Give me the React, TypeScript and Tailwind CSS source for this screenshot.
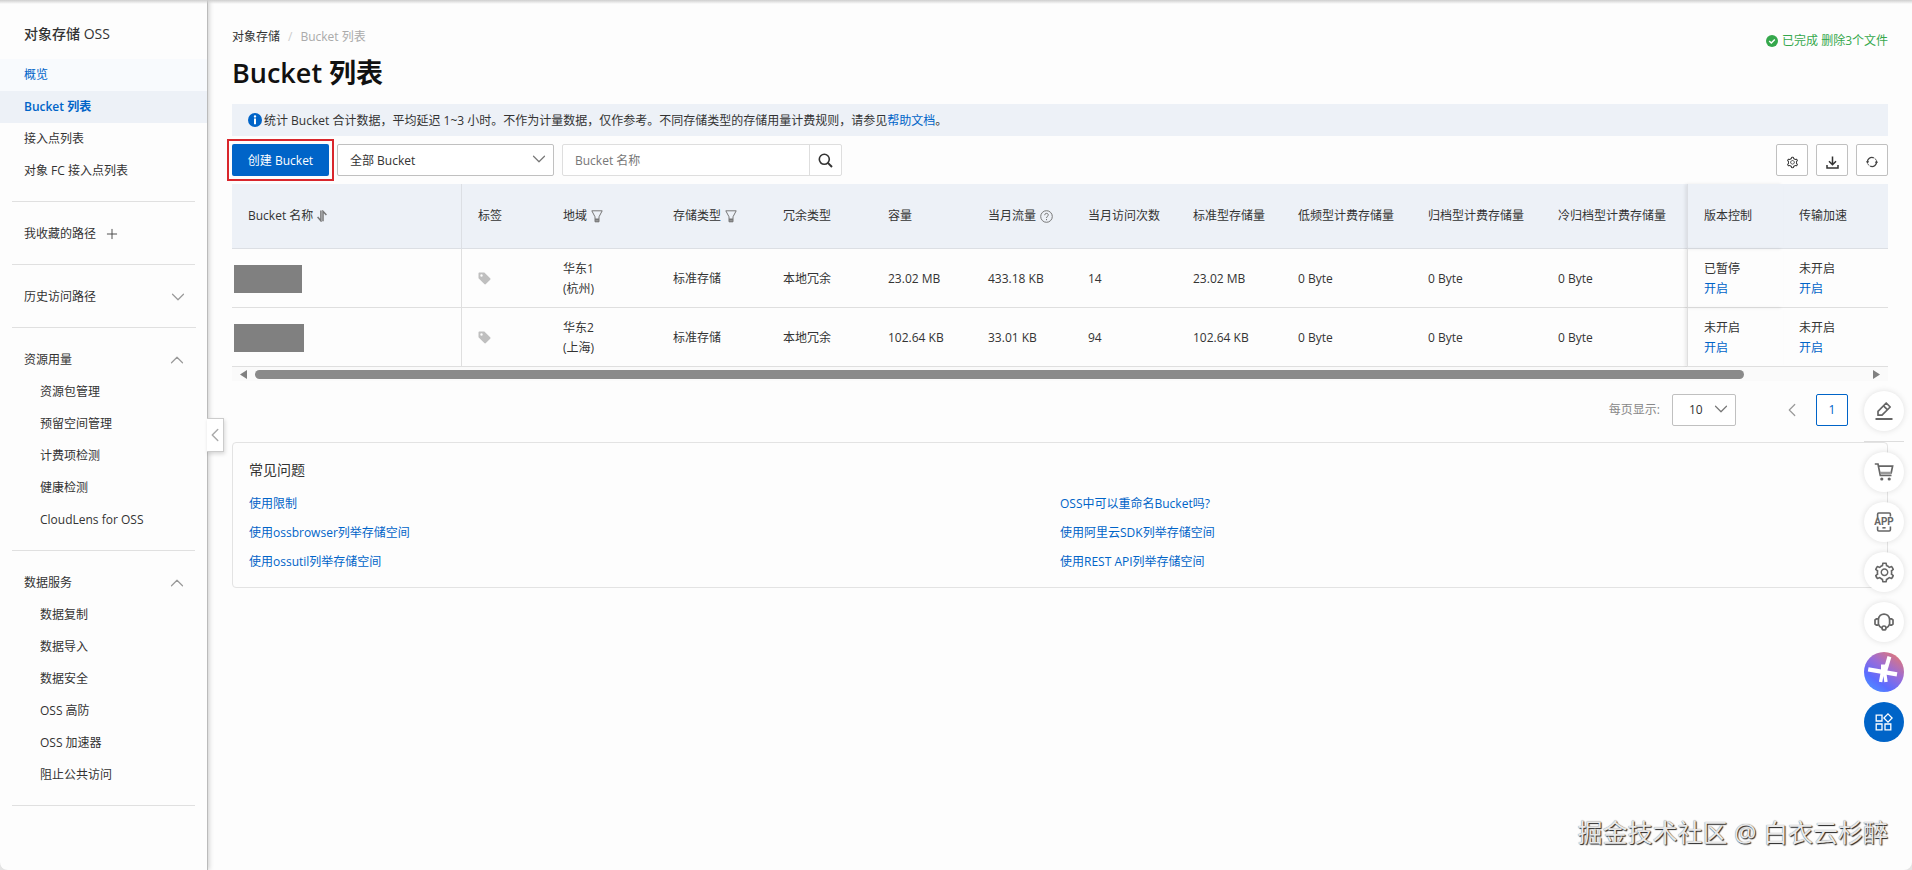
import type { ReactNode } from "react";
import { ChevronDown, ChevronLeft, ChevronUp, Plus } from "lucide-react";
import { AiOutlineSetting } from "react-icons/ai";

const NAV = [
  { label: "概览", className: "bg-[#f8fafd] text-[#0064c8]" },
  { label: "Bucket 列表", className: "bg-[#edf1f7] font-semibold text-[#0064c8]" },
  { label: "接入点列表", className: "" },
  { label: "对象 FC 接入点列表", className: "" },
];

const USAGE = ["资源包管理", "预留空间管理", "计费项检测", "健康检测", "CloudLens for OSS"];
const SERVICES = ["数据复制", "数据导入", "数据安全", "OSS 高防", "OSS 加速器", "阻止公共访问"];

const COLUMNS: { title: string; col: string; icon?: ReactNode }[] = [
  { title: "Bucket 名称", col: "w-[230px]", icon: <SortIcon /> },
  { title: "标签", col: "w-[85px]" },
  { title: "地域", col: "w-[110px]", icon: <FunnelIcon /> },
  { title: "存储类型", col: "w-[110px]", icon: <FunnelIcon /> },
  { title: "冗余类型", col: "w-[105px]" },
  { title: "容量", col: "w-[100px]" },
  { title: "当月流量", col: "w-[100px]", icon: <HelpIcon /> },
  { title: "当月访问次数", col: "w-[105px]" },
  { title: "标准型存储量", col: "w-[105px]" },
  { title: "低频型计费存储量", col: "w-[130px]" },
  { title: "归档型计费存储量", col: "w-[130px]" },
  { title: "冷归档型计费存储量", col: "w-[145px]" },
  { title: "版本控制", col: "w-[96px]" },
  { title: "传输加速", col: "w-[105px]" },
];

const ROWS = [
  {
    mask: "w-[68px]",
    region: "华东1",
    city: "(杭州)",
    cells: ["标准存储", "本地冗余", "23.02 MB", "433.18 KB", "14", "23.02 MB", "0 Byte", "0 Byte", "0 Byte"],
    version: "已暂停",
  },
  {
    mask: "w-[70px]",
    region: "华东2",
    city: "(上海)",
    cells: ["标准存储", "本地冗余", "102.64 KB", "33.01 KB", "94", "102.64 KB", "0 Byte", "0 Byte", "0 Byte"],
    version: "未开启",
  },
];

const FAQ = [
  "使用限制",
  "OSS中可以重命名Bucket吗?",
  "使用ossbrowser列举存储空间",
  "使用阿里云SDK列举存储空间",
  "使用ossutil列举存储空间",
  "使用REST API列举存储空间",
];

function SortIcon() {
  return (
    <svg width="10" height="12" viewBox="0 0 10 12" fill="none" stroke="#777" strokeWidth="1.5">
      <path d="M3.9 0.5V10.8L0.6 7" />
      <path d="M6 11.3V1.3L9.4 5" />
    </svg>
  );
}

function FunnelIcon() {
  return (
    <svg width="12" height="13" viewBox="0 0 12 13" fill="none" stroke="#777">
      <path d="M0.8 0.8H11.2L8 6.8V11.8H4V6.8Z" />
      <path d="M4 9.2H8M4 11H8" strokeWidth="1.4" />
    </svg>
  );
}

function HelpIcon() {
  return (
    <svg width="13" height="13" viewBox="0 0 13 13" fill="none" stroke="#777">
      <circle cx="6.5" cy="6.5" r="5.8" />
      <path d="M4.7 5.2C4.7 2.7 8.3 2.8 8.3 5C8.3 6.3 6.5 6.4 6.5 8" />
      <path d="M6.5 9V10.2" />
    </svg>
  );
}

function TagIcon() {
  return (
    <svg width="13" height="13" viewBox="0 0 13 13" fill="#bfbfbf">
      <path
        fillRule="evenodd"
        d="M0.5 1.5C0.5 0.9 0.9 0.5 1.5 0.5H6.3L12.2 6.2C12.7 6.7 12.7 7.2 12.2 7.7L7.9 12C7.4 12.5 6.8 12.5 6.3 12L0.5 6.3ZM3.5 2.3A1.2 1.2 0 1 0 3.5 4.7A1.2 1.2 0 1 0 3.5 2.3Z"
      />
    </svg>
  );
}

function InfoIcon() {
  return (
    <svg width="14" height="14" viewBox="0 0 14 14">
      <circle cx="7" cy="7" r="7" fill="#0064c8" />
      <circle cx="7" cy="3.4" r="1.2" fill="#fff" />
      <path d="M7 5.6V11.2" stroke="#fff" strokeWidth="2" />
    </svg>
  );
}

function SearchIcon() {
  return (
    <svg width="15" height="15" viewBox="0 0 15 15" fill="none" stroke="#333" strokeWidth="1.6">
      <circle cx="6.3" cy="6.3" r="5" />
      <path d="M9.9 9.9L14 14" strokeWidth="2" />
    </svg>
  );
}

function DownloadIcon() {
  return (
    <svg width="13" height="13" viewBox="0 0 13 13" fill="none" stroke="#333" strokeWidth="1.5">
      <path d="M6.5 0.5V8.5M3 5.2L6.5 8.7L10 5.2" />
      <path d="M1 9V12H12V9" />
    </svg>
  );
}

function RefreshIcon() {
  return (
    <svg width="12" height="12" viewBox="0 0 12 12" fill="none" stroke="#444" strokeWidth="1.3">
      <path d="M1.6 7.2A4.6 4.6 0 0 1 7.8 1.8" />
      <path d="M10.4 4.8A4.6 4.6 0 0 1 4.2 10.2" />
      <path d="M8.6 2.3A4.6 4.6 0 0 1 10.4 4.6M3.4 9.7A4.6 4.6 0 0 1 1.7 7.6" strokeWidth="0.9" />
      <path d="M0 5.2H3.2L1.5 7.6Z" fill="#444" stroke="none" />
      <path d="M12 6.8H8.8L10.5 4.4Z" fill="#444" stroke="none" />
    </svg>
  );
}

function PencilIcon() {
  return (
    <svg width="20" height="20" viewBox="0 0 20 20" fill="none" stroke="#666" strokeWidth="1.7" strokeLinejoin="round">
      <path d="M4 10.3L12.2 2L16.2 6L8 14.2H4Z" />
      <path d="M9.5 4.8L13.4 8.7" />
      <path d="M1.5 18H18.5" strokeWidth="2" />
    </svg>
  );
}

function CartIcon() {
  return (
    <svg width="20" height="20" viewBox="0 0 20 20" fill="none" stroke="#666" strokeWidth="1.7">
      <path d="M0.8 2H4L6.3 13.5H17.5" />
      <path d="M4.6 4.2H18.6L17.2 11H6" />
      <path d="M6.2 9.8H17.2V12.6H6.4Z" fill="#999" stroke="none" />
      <circle cx="7.8" cy="17" r="1.6" fill="#666" stroke="none" />
      <circle cx="15.2" cy="17" r="1.6" fill="#666" stroke="none" />
    </svg>
  );
}

function AppIcon() {
  return (
    <svg width="20" height="20" viewBox="0 0 20 20" fill="none" stroke="#666" strokeWidth="1.6">
      <path d="M3.6 5V2.2Q3.6 1 4.8 1H15.2Q16.4 1 16.4 2.2V4.5" />
      <path d="M3.6 14.5V17.8Q3.6 19 4.8 19H15.2Q16.4 19 16.4 17.8V14.5" />
      <path d="M8.4 15.8H11.6" />
      <text
        x="10"
        y="13"
        textAnchor="middle"
        fill="#666"
        stroke="none"
        fontSize="10"
        fontWeight="700"
        fontFamily="Roboto, sans-serif"
      >
        APP
      </text>
    </svg>
  );
}

function HeadsetIcon() {
  return (
    <svg width="20" height="20" viewBox="0 0 20 20" fill="none" stroke="#666" strokeWidth="1.7" strokeLinejoin="round">
      <path d="M4.4 13V7.6C4.8 0.2 15.2 0.2 15.6 7.6V13" />
      <path d="M4.4 6.8H2.6L1 8V12L2.6 13.2H4.4" />
      <path d="M15.6 6.8H17.4L19 8V12L17.4 13.2H15.6" />
      <path d="M15.4 12.6C14.9 14.2 13.8 15.4 12.2 16M4.6 12.6C5.1 14.2 6.2 15.4 7.8 16" />
      <circle cx="10" cy="16" r="2" />
    </svg>
  );
}

function SparkIcon() {
  return (
    <svg width="40" height="40" viewBox="0 0 40 40" fill="none" stroke="#fff">
      <path d="M25.4 4.6L20.6 21" strokeWidth="4" />
      <path d="M4.2 17.4L33 22.4" strokeWidth="4.2" />
      <path d="M17 12.5H22.5V21H17Z" fill="#fff" stroke="none" />
      <path d="M18.6 19L16.6 30M20.4 19L22 30" strokeWidth="3.4" />
    </svg>
  );
}

function BlocksIcon() {
  return (
    <svg width="18" height="18" viewBox="0 0 18 18" fill="none" stroke="#fff" strokeWidth="1.3">
      <path d="M1.2 2.2H7V8H1.2ZM1.2 11H7V16.8H1.2ZM10 11H15.8V16.8H10Z" />
      <path d="M13 0.9L17.1 5L13 9.1L8.9 5Z" />
    </svg>
  );
}

const FLOATS = [
  { label: "购物车", icon: <CartIcon /> },
  { label: "应用", icon: <AppIcon /> },
  { label: "设置", icon: <AiOutlineSetting size={23} color="#666" /> },
  { label: "客服", icon: <HeadsetIcon /> },
];

const floatBase = "flex size-10 items-center justify-center rounded-full";
const floatWhite = `${floatBase} bg-white shadow-[0_0_6px_rgba(0,0,0,0.12)]`;

function NavGroup({ title, items }: { title: string; items: string[] }) {
  return (
    <section className="mx-3 border-b border-[#e0e0e0] py-[15px]">
      <button type="button" className="flex h-8 w-full items-center justify-between pt-px pr-[7px] pl-3">
        {title}
        <ChevronUp size={22} strokeWidth={1.3} color="#999" />
      </button>
      <ul>
        {items.map((item) => (
          <li key={item}>
            <a href="#" className="flex h-8 items-center pt-px pl-7">
              {item}
            </a>
          </li>
        ))}
      </ul>
    </section>
  );
}

function Sidebar() {
  return (
    <nav className="relative w-52 shrink-0 border-r border-[#bbb] bg-[#fdfdfd] shadow-[1px_0_5px_rgba(0,0,0,0.2)]">
      <h2 className="flex h-[59px] items-center pt-2 pl-6 text-sm font-medium">对象存储 OSS</h2>
      <ul>
        {NAV.map((item) => (
          <li key={item.label}>
            <a href="#" className={`flex h-8 items-center pl-6 ${item.className}`}>
              {item.label}
            </a>
          </li>
        ))}
      </ul>
      <div className="mx-3 h-[15px] border-b border-[#e0e0e0]" />
      <div className="mx-3 flex h-[63px] items-center gap-2 border-b border-[#e0e0e0] pt-px pl-3">
        我收藏的路径
        <button type="button" aria-label="添加">
          <Plus size={16} strokeWidth={1.4} color="#444" />
        </button>
      </div>
      <button
        type="button"
        className="mx-3 flex h-[63px] w-[184px] items-center justify-between border-b border-[#e0e0e0] pt-px pr-[7px] pl-3"
      >
        历史访问路径
        <ChevronDown size={22} strokeWidth={1.3} color="#999" />
      </button>
      <NavGroup title="资源用量" items={USAGE} />
      <NavGroup title="数据服务" items={SERVICES} />
      <button
        type="button"
        aria-label="收起"
        className="absolute top-[418px] left-full flex h-[34px] w-[17px] items-center justify-center border border-l-0 border-[#ccc] bg-white shadow-[1px_2px_4px_rgba(0,0,0,0.15)]"
      >
        <ChevronLeft size={22} strokeWidth={1.6} color="#aaa" className="shrink-0" />
      </button>
    </nav>
  );
}

function SelectArrow() {
  return (
    <ChevronDown
      size={22}
      strokeWidth={1.3}
      color="#777"
      className="pointer-events-none absolute top-1 right-1"
    />
  );
}

function Toolbar() {
  const square = "flex size-8 items-center justify-center rounded-xs border border-[#c0c0c0] bg-white pt-1";
  return (
    <div className="mt-2 flex gap-2">
      <div className="outline-2 outline-offset-3 outline-[#d9262c]">
        <button type="button" className="block h-8 w-[97px] rounded-xs bg-[#0064c8] pt-px text-white">
          创建 Bucket
        </button>
      </div>
      <div className="relative">
        <select
          aria-label="Bucket 范围"
          className="h-8 w-[217px] appearance-none rounded-xs border border-[#c0c0c0] bg-white px-3 pt-px"
        >
          <option>全部 Bucket</option>
        </select>
        <SelectArrow />
      </div>
      <div className="flex h-8 w-70 rounded-xs border border-[#dedede] bg-white">
        <input
          type="text"
          aria-label="Bucket 名称"
          placeholder="Bucket 名称"
          className="min-w-0 flex-1 px-3 pt-px outline-none placeholder:text-[#777]"
        />
        <button
          type="button"
          aria-label="搜索"
          className="flex w-8 items-center justify-center border-l border-[#dedede]"
        >
          <SearchIcon />
        </button>
      </div>
      <div className="ml-auto flex gap-2">
        <button type="button" aria-label="列设置" className={square}>
          <AiOutlineSetting size={13} color="#333" />
        </button>
        <button type="button" aria-label="下载" className={square}>
          <DownloadIcon />
        </button>
        <button type="button" aria-label="刷新" className={square}>
          <RefreshIcon />
        </button>
      </div>
    </div>
  );
}

function cellBorder(index: number) {
  if (index === 0) return "border-r";
  if (index === 12) return "border-l shadow-[-2px_0_3px_rgba(0,0,0,0.08)]";
  return "";
}

function BucketTable() {
  return (
    <div className="mt-2">
      <table className="w-full table-fixed border-separate border-spacing-0 text-left">
        <thead>
          <tr className="h-[65px] bg-[#edf1f7]">
            {COLUMNS.map((column, index) => (
              <th
                key={column.title}
                className={`border-b border-[#dcdfe4] pl-4 font-normal whitespace-nowrap ${column.col} ${cellBorder(index)}`}
              >
                <span className="flex items-center gap-1">
                  {column.title}
                  {column.icon}
                </span>
              </th>
            ))}
          </tr>
        </thead>
        <tbody>
          {ROWS.map((row) => (
            <tr key={row.region} className="h-[59px]">
              <td className="border-r border-b border-[#dfdfdf] pt-[2px] pl-[2px]">
                <div className={`h-7 bg-[#808080] ${row.mask}`} />
              </td>
              <td className="border-b border-[#dfdfdf] pt-px pl-4">
                <TagIcon />
              </td>
              <td className="border-b border-[#dfdfdf] pt-px pl-4 leading-5">
                {row.region}
                <br />
                {row.city}
              </td>
              {row.cells.map((cell, index) => (
                <td key={index} className="border-b border-[#dfdfdf] pt-px pl-4">
                  {cell}
                </td>
              ))}
              <td className="border-b border-l border-[#dfdfdf] pt-px pl-4 leading-5 shadow-[-2px_0_3px_rgba(0,0,0,0.08)]">
                {row.version}
                <br />
                <a href="#" className="text-[#0064c8]">
                  开启
                </a>
              </td>
              <td className="border-b border-[#dfdfdf] pt-px pl-4 leading-5">
                未开启
                <br />
                <a href="#" className="text-[#0064c8]">
                  开启
                </a>
              </td>
            </tr>
          ))}
        </tbody>
      </table>
      <div className="flex h-[14px] items-center bg-[#fafafa] px-2">
        <svg width="7" height="9" viewBox="0 0 7 9" fill="#808080">
          <path d="M7 0V9L0 4.5Z" />
        </svg>
        <div className="mx-2 flex-1">
          <div className="h-[9px] w-[92.5%] rounded-full bg-[#8a8a8a]" />
        </div>
        <svg width="7" height="9" viewBox="0 0 7 9" fill="#808080">
          <path d="M0 0V9L7 4.5Z" />
        </svg>
      </div>
    </div>
  );
}

function Pagination() {
  return (
    <div className="mt-[13px] flex h-8 items-center justify-end pr-10">
      <label htmlFor="page-size" className="text-[#888]">
        每页显示:
      </label>
      <div className="relative ml-3">
        <select
          id="page-size"
          className="h-8 w-16 appearance-none rounded-xs border border-[#c0c0c0] bg-white pl-4"
        >
          <option>10</option>
        </select>
        <SelectArrow />
      </div>
      <button type="button" aria-label="上一页" className="mr-4 ml-12 flex size-4 items-center justify-center">
        <ChevronLeft size={22} strokeWidth={1.3} color="#999" className="shrink-0" />
      </button>
      <button type="button" className="size-8 rounded-xs border border-[#0064c8] bg-white text-[#0064c8]">
        1
      </button>
    </div>
  );
}

function FloatBar() {
  return (
    <aside className="absolute top-[391px] right-2 flex flex-col items-center">
      <button type="button" aria-label="反馈" className={floatWhite}>
        <PencilIcon />
      </button>
      <div className="my-[10px] h-px w-10 bg-[#ddd]" />
      <div className="flex flex-col gap-[10px]">
        {FLOATS.map((item) => (
          <button key={item.label} type="button" aria-label={item.label} className={floatWhite}>
            {item.icon}
          </button>
        ))}
        <button
          type="button"
          aria-label="AI 助理"
          className={`${floatBase} bg-[linear-gradient(215deg,#e8786c_5%,#9a6cd8_42%,#5b6cff_70%,#48a0ff_100%)]`}
        >
          <SparkIcon />
        </button>
        <button type="button" aria-label="更多" className={`${floatBase} bg-[#0064c8]`}>
          <BlocksIcon />
        </button>
      </div>
    </aside>
  );
}

export default function App() {
  return (
    <div className="min-h-screen bg-[#e4e4e4] font-['Open_Sans','Noto_Sans_CJK_SC',sans-serif] text-xs text-[#333]">
      <div className="relative flex min-h-screen overflow-hidden rounded-b-lg bg-[#fdfdfd]">
        <Sidebar />
        <main className="min-w-0 flex-1 pt-[29px] pr-6 pl-6">
          <div className="flex items-start justify-between">
            <div>
              <div className="flex gap-2">
                <a href="#">对象存储</a>
                <span className="text-[#ccc]">/</span>
                <span className="text-[#aaa]">Bucket 列表</span>
              </div>
              <h1 className="mt-[10px] text-[27px] leading-9 font-semibold text-[#111]">Bucket 列表</h1>
            </div>
            <p className="mt-1 flex items-center gap-1 text-[#35a84c]">
              <svg width="12" height="12" viewBox="0 0 12 12" fill="none">
                <circle cx="6" cy="6" r="6" fill="#35a84c" />
                <path d="M3.2 6L5.3 8L8.8 4.4" stroke="#fff" strokeWidth="1.5" />
              </svg>
              已完成 删除3个文件
            </p>
          </div>
          <div className="mt-[13px] flex h-8 items-center gap-[2px] bg-[#edf1f7] pl-4">
            <InfoIcon />
            <p className="pt-px">
              统计 Bucket 合计数据，平均延迟 1~3 小时。不作为计量数据，仅作参考。不同存储类型的存储用量计费规则，请参见
              <a href="#" className="text-[#0064c8]">
                帮助文档
              </a>
              。
            </p>
          </div>
          <Toolbar />
          <BucketTable />
          <Pagination />
          <section className="mt-4 rounded-sm border border-[#e3e3e3] px-4 pt-[17px] pb-[11px]">
            <h3 className="text-sm">常见问题</h3>
            <ul className="mt-[9px] grid grid-cols-2">
              {FAQ.map((item) => (
                <li key={item} className="flex h-[29px] items-center">
                  <a href="#" className="text-[#0064c8]">
                    {item}
                  </a>
                </li>
              ))}
            </ul>
          </section>
        </main>
        <FloatBar />
        <p className="absolute right-6 bottom-5 text-[25px] leading-9 text-[#e8e8e8] [text-shadow:1px_1px_1px_#222,0_0_1px_#777]">
          掘金技术社区 @ 白衣云杉醉
        </p>
        <div className="absolute inset-x-0 top-0 h-1 bg-linear-to-b from-[#cfcfcf] to-transparent" />
      </div>
    </div>
  );
}
